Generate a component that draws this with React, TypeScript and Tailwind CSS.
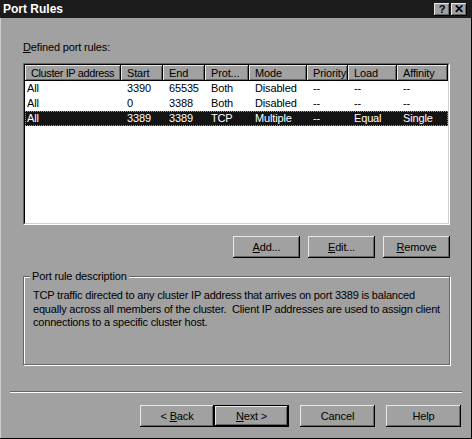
import React from 'react';

const raised =
  'bg-[#a1a1a1] shadow-[inset_-1px_-1px_0_#000,inset_1px_1px_0_#e8e8e8,inset_-2px_-2px_0_#666]';

const columns = [
  { label: 'Cluster IP address', w: 'w-[96px]' },
  { label: 'Start', w: 'w-[42px]' },
  { label: 'End', w: 'w-[42px]' },
  { label: 'Prot...', w: 'w-[44px]' },
  { label: 'Mode', w: 'w-[58px]' },
  { label: 'Priority', w: 'w-[41px]' },
  { label: 'Load', w: 'w-[49px]' },
  { label: 'Affinity', w: 'w-[51px]' },
];

const rows = [
  ['All', '3390', '65535', 'Both', 'Disabled', '--', '--', '--'],
  ['All', '0', '3388', 'Both', 'Disabled', '--', '--', '--'],
  ['All', '3389', '3389', 'TCP', 'Multiple', '--', 'Equal', 'Single'],
];

/** Classic push button with an underlined mnemonic */
function Btn({
  w,
  children,
  isDefault,
}: {
  w: string;
  children: React.ReactNode;
  isDefault?: boolean;
}) {
  return (
    <div
      className={`${w} h-[22px] flex items-center justify-center ${raised} ${
        isDefault ? 'outline outline-1 outline-black -outline-offset-1 shadow-[inset_-2px_-2px_0_#000,inset_2px_2px_0_#e8e8e8,inset_-3px_-3px_0_#666]' : ''
      }`}
    >
      {children}
    </div>
  );
}

export default function App() {
  return (
    <div className="w-[472px] h-[439px] bg-[#a1a1a1] flex flex-col font-['Liberation_Sans',Arial,sans-serif] text-[11px] leading-[13px] tracking-[-0.15px] text-black shadow-[inset_-1px_-1px_0_#000,inset_1px_1px_0_#cfcfcf]">
      {/* Title bar */}
      <div className="h-[18px] bg-[#1c1c1c] flex items-center pl-[3px] pr-[5px]">
        <span className="flex-1 text-white font-bold text-[12px] tracking-normal">Port Rules</span>
        <div className="flex gap-[1px]">
          <div className={`w-[16px] h-[13px] ${raised} flex items-center justify-center font-bold text-[11px] leading-none`}>?</div>
          <div className={`w-[16px] h-[13px] ${raised} flex items-center justify-center font-bold text-[12px] leading-none`}>✕</div>
        </div>
      </div>

      <div className="flex flex-col pl-[23px] pr-[22px]">
        <div className="mt-[23px]">
          <span className="underline">D</span>efined port rules:
        </div>

        {/* List view */}
        <div className="mt-[9px] h-[162px] border border-t-[#666] border-l-[#666] border-r-white border-b-white">
          <div className="h-full bg-white border border-t-black border-l-black border-r-[#d0d0d0] border-b-[#d0d0d0]">
            <div className="flex h-[16px]">
              {columns.map((c, j) => (
                <div
                  key={c.label}
                  className={`${c.w} shrink-0 h-full pl-[6px] flex items-center whitespace-nowrap overflow-hidden ${
                    j === 0 ? 'tracking-[-0.4px]' : ''
                  } ${raised}`}
                >
                  {c.label}
                </div>
              ))}
            </div>
            {rows.map((r, i) => {
              const sel = i === 2;
              return (
                <div
                  key={i}
                  className={`flex h-[15px] items-center ${
                    sel ? 'bg-[#141414] text-white outline outline-1 outline-dotted outline-[#9a9a9a] -outline-offset-1' : ''
                  }`}
                >
                  {r.map((v, j) => (
                    <div
                      key={j}
                      className={`${columns[j].w} shrink-0 ${j === 0 ? 'pl-[2px]' : 'pl-[6px]'} whitespace-nowrap`}
                    >
                      {v}
                    </div>
                  ))}
                </div>
              );
            })}
          </div>
        </div>

        {/* Add / Edit / Remove */}
        <div className="mt-[11px] flex justify-end gap-[8px]">
          <Btn w="w-[67px]">
            <span><span className="underline">A</span>dd...</span>
          </Btn>
          <Btn w="w-[67px]">
            <span><span className="underline">E</span>dit...</span>
          </Btn>
          <Btn w="w-[67px]">
            <span><span className="underline">R</span>emove</span>
          </Btn>
        </div>

        {/* Group box */}
        <div className="relative mt-[18px] h-[89px] border border-[#666] shadow-[1px_1px_0_#fff,inset_1px_1px_0_#fff]">
          <span className="absolute -top-[7px] left-[6px] px-[2px] bg-[#a1a1a1]">Port rule description</span>
          <p className="pt-[12px] pl-[9px] leading-[13.5px] whitespace-nowrap tracking-[-0.2px]">
            TCP traffic directed to any cluster IP address that arrives on port 3389 is balanced
            <br />
            equally across all members of the cluster.&nbsp; Client IP addresses are used to assign client
            <br />
            connections to a specific cluster host.
          </p>
        </div>
      </div>

      {/* Separator */}
      <div className="mt-[26px] mx-[10px] border-t border-t-[#666] border-b border-b-white" />

      {/* Wizard buttons */}
      <div className="mt-[12px] flex justify-end pr-[11px]">
        <Btn w="w-[74px]">
          <span>&lt; <span className="underline">B</span>ack</span>
        </Btn>
        <Btn w="w-[75px]" isDefault>
          <span><span className="underline">N</span>ext &gt;</span>
        </Btn>
        <div className="w-[11px]" />
        <Btn w="w-[75px]">Cancel</Btn>
        <div className="w-[11px]" />
        <Btn w="w-[75px]">Help</Btn>
      </div>
    </div>
  );
}
